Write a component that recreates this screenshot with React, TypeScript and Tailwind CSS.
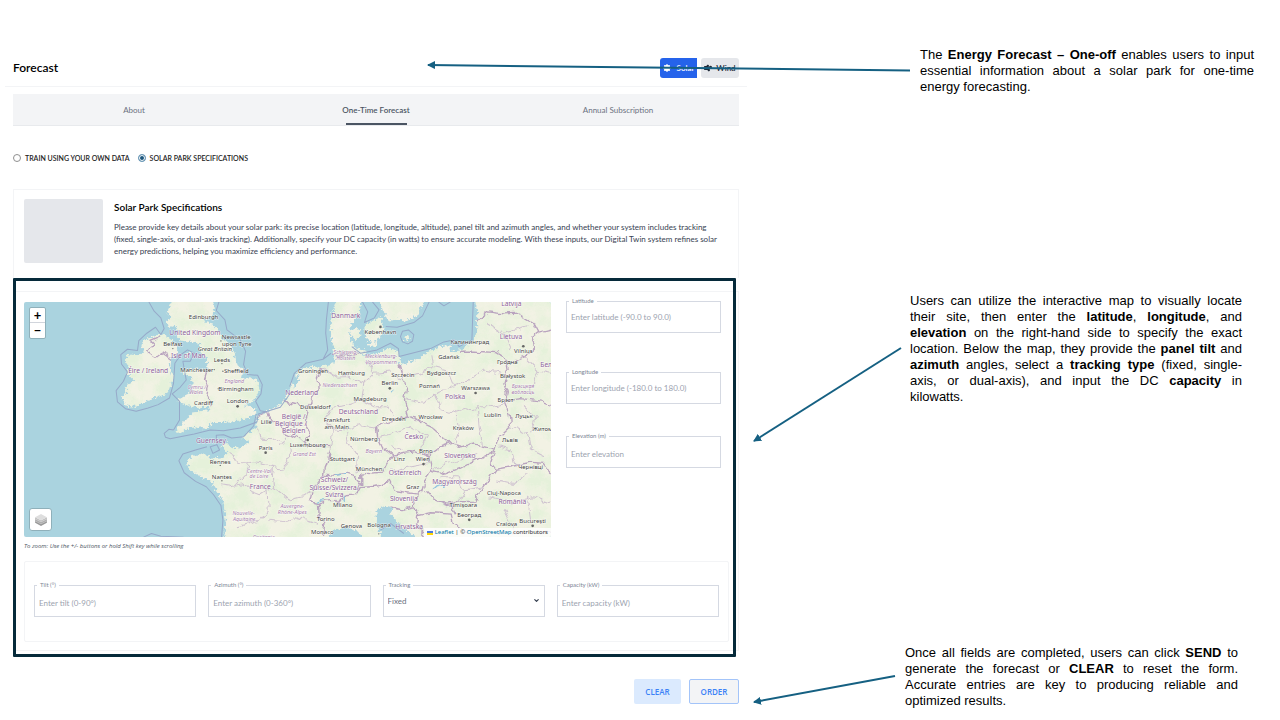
import React, { useState } from 'react';
import { ChevronDown, Wind } from 'lucide-react';

type Point = [x: number, y: number, text: string];

const COUNTRIES: Point[] = [
  [554, 136, 'United Kingdom'], [534, 204, 'Isle of Man'], [414, 249, 'Éire / Ireland'], [602, 458, 'Guernsey'],
  [750, 597, 'France'], [1006, 85, 'Danmark'], [874, 315, 'Nederland'], [850, 386, 'België /'], [842, 408, 'Belgique /'],
  [850, 430, 'Belgien'], [1044, 373, 'Deutschland'], [1334, 327, 'Polska'], [1210, 448, 'Česko'], [1348, 504, 'Slovensko'],
  [1184, 556, 'Österreich'], [972, 576, 'Schweiz/'], [972, 599, 'Suisse/Svizzera/'], [972, 621, 'Svizra'],
  [1180, 633, 'Slovenija'], [1332, 582, 'Magyarország'], [1505, 641, 'România'], [1196, 716, 'Hrvatska'],
  [1501, 148, 'Lietuva'], [1502, 48, 'Latvija'], [1612, 232, 'Бела'],
];

const REGIONS: Point[] = [
  [672, 278, 'England'], [560, 296, 'Cymru /'], [558, 312, 'Wales'], [746, 548, 'Centre-Val'], [746, 565, 'de Loire'],
  [700, 676, 'Nouvelle-'], [702, 693, 'Aquitaine'], [760, 746, 'Occitanie'], [846, 655, 'Auvergne-'], [846, 672, 'Rhône-Alpes'],
  [882, 497, 'Grand Est'], [1006, 193, 'Schleswig-'], [1006, 210, 'Holstein'], [1112, 204, 'Mecklenburg-'],
  [1112, 221, 'Vorpommern'], [988, 290, 'Niedersachsen'], [1090, 490, 'Bayern'], [1537, 294, 'Брэсцкая'], [1537, 311, 'вобласць'],
];

const CITIES: Point[] = [
  [580, 88, 'Edinburgh'], [678, 148, 'Newcastle'], [680, 168, 'upon Tyne'], [488, 169, 'Belfast'], [635, 215, 'Leeds'],
  [560, 245, 'Manchester'], [678, 250, 'Sheffield'], [677, 302, 'Birmingham'], [580, 344, 'Cardiff'], [682, 340, 'London'],
  [768, 402, 'Lille'], [766, 480, 'Paris'], [630, 521, 'Rennes'], [635, 566, 'Nantes'], [1110, 132, 'København'],
  [908, 248, 'Groningen'], [1023, 254, 'Hamburg'], [1177, 261, 'Szczecin'], [1315, 208, 'Gdańsk'], [1293, 254, 'Bydgoszcz'],
  [1378, 163, 'Калининград'], [1138, 285, 'Berlin'], [1257, 293, 'Poznań'], [1395, 301, 'Warszawa'], [1079, 333, 'Magdeburg'],
  [915, 358, 'Düsseldorf'], [979, 397, 'Frankfurt'], [979, 417, 'am Main'], [1150, 392, 'Dresden'], [1260, 388, 'Wrocław'],
  [1446, 382, 'Lublin'], [1538, 190, 'Vilnius'], [1490, 222, 'Гродна'], [1506, 265, 'Białystok'], [1485, 336, 'Брэст'],
  [1540, 385, 'Луцьк'], [1596, 422, 'Житом'], [1498, 456, 'Львів'], [1358, 420, 'Kraków'], [892, 472, 'Luxembourg'],
  [1060, 453, 'Nürnberg'], [996, 512, 'Stuttgart'], [1076, 544, 'München'], [1167, 512, 'Linz'], [1237, 514, 'Wien'],
  [1246, 489, 'Brno'], [1207, 598, 'Graz'], [1560, 537, 'Чернівці'], [1480, 616, 'Cluj-Napoca'], [1358, 651, 'Timișoara'],
  [1376, 680, 'Београд'], [1488, 707, 'Craiova'], [1566, 698, 'București'], [997, 652, 'Milano'], [946, 694, 'Torino'],
  [1023, 714, 'Genova'], [1106, 711, 'Bologna'], [936, 731, 'Monaco'],
];

const DOTS = [
  [682, 349], [766, 488], [1110, 111], [1138, 295], [1395, 309], [1538, 169], [1239, 522], [892, 450], [1376, 689], [1566, 707],
  [632, 153], [488, 176], [635, 221], [612, 239], [638, 244], [624, 296], [630, 526], [635, 572], [1180, 386], [1105, 731],
];

const LAND = [
  // Great Britain
  'M488 30L470 68L482 80L468 98L474 112L494 108L506 122L500 140L514 152L548 156L566 162L572 188L590 206L592 240L562 236L528 240L520 250L546 262L548 300L520 320L500 332L532 346L562 352L596 350L604 360L570 364L544 368L530 388L508 408L496 426L514 430L534 414L562 412L588 416L606 396L642 396L680 392L712 386L738 370L736 356L704 346L736 328L748 300L742 272L716 262L694 266L700 242L682 226L672 190L660 164L640 150L622 116L602 100L576 94L604 84L614 58L608 30Z',
  // Ireland
  'M402 150L438 136L464 134L486 150L504 172L502 196L480 208L478 232L488 262L480 296L468 312L438 322L402 336L374 350L344 346L336 318L352 308L344 290L370 270L350 250L356 230L344 212L352 194L386 196L402 184L394 166Z',
  // Isle of Man and Anglesey
  'M526 190L540 184L536 202L526 206Z', 'M520 240L534 234L540 246L524 252Z',
  // Continent
  'M642 750L646 690L640 634L620 602L602 572L576 562L540 542L528 514L548 498L576 490L606 506L640 500L652 490L634 464L652 460L662 476L700 470L716 456L694 442L738 412L742 378L772 364L802 350L822 332L838 300L848 268L866 240L900 232L930 230L958 226L974 214L970 180L964 150L960 110L966 72L980 30L1052 30L1048 70L1026 96L1016 130L1026 160L1042 178L1070 184L1054 196L1072 200L1104 190L1132 176L1156 180L1172 204L1168 222L1210 214L1250 188L1290 168L1316 166L1320 186L1350 182L1374 164L1392 150L1400 110L1400 70L1394 30L1640 30L1640 750Z',
  // Danish islands, Sweden, Bornholm
  'M1020 120L1044 114L1050 136L1038 150L1022 140Z', 'M1062 108L1090 92L1112 84L1120 118L1108 146L1086 158L1064 140Z',
  'M1068 160L1098 156L1100 168L1080 172Z', 'M1106 30L1120 70L1136 92L1172 88L1184 96L1222 76L1242 30Z', 'M1184 134L1196 140L1192 152L1182 146Z',
];

const WATER = [
  'M1098 660L1126 646L1146 652L1140 670L1156 692L1184 716L1226 750L1120 750L1100 712Z',
  'M946 750L972 722L1004 712L1036 718L1066 750Z',
  'M846 262L868 256L862 280L850 296Z', 'M1600 748L1624 740L1624 750Z',
];

const BORDERS = [
  'M412 184L428 164L418 152L450 138M412 184L436 202L454 188L482 208',
  'M594 238L586 262L598 290L592 320L604 350',
  'M744 378L772 366L778 388L808 400L822 426L850 440L884 456L914 468L962 470',
  'M820 336L850 342L880 350L890 370L882 400L896 424L888 450L894 470',
  'M890 362L900 330L924 304L920 266L934 232',
  'M962 470L952 506L942 552L974 556L1008 550L1030 556L1054 582',
  'M942 552L922 580L904 606L898 634L924 640L940 630L974 628L986 642L1004 614L1030 612L1052 590L1100 584L1140 574L1154 602L1220 612',
  'M924 640L926 676L944 700L936 741',
  'M1168 222L1178 260L1188 300L1182 330L1194 378L1164 386L1130 396L1098 412L1102 440L1116 470L1150 498L1130 522L1118 546L1054 552L1054 582',
  'M1194 378L1230 396L1264 412L1290 436L1318 460L1350 470L1392 462L1430 472L1454 478L1464 444L1500 410L1496 376L1482 340L1490 310L1480 282L1490 240L1484 206L1456 188L1396 184L1352 184',
  'M1150 498L1184 490L1216 484L1254 500L1290 470L1318 460',
  'M1254 500L1264 540L1242 570L1234 600L1220 612L1210 650L1170 658L1140 650',
  'M1264 540L1306 552L1350 536L1398 510L1440 490L1454 478',
  'M1242 600L1270 630L1310 646L1346 638L1390 636L1420 590L1456 538L1500 530L1560 516L1598 520L1624 556',
  'M1456 538L1440 518L1454 478M1210 650L1222 676L1260 668L1322 672L1328 700L1370 724L1440 728L1500 730L1624 726',
  'M1222 676L1218 704L1250 741M1322 645L1336 672',
  'M1400 90L1430 66L1480 72L1524 70L1570 98L1584 124L1560 142L1574 170L1540 200L1500 216L1484 206M1584 130L1624 120',
  'M1490 332L1530 326L1600 334L1624 344',
  'M962 190L1004 200L1046 192',
];

const REGION_LINES = [
  'M652 490L690 514L714 516L706 552L670 590L634 584M742 412L748 444L790 446L820 466M714 516L748 520L790 530L786 560L790 590L750 614L724 604L700 584L660 590',
  'M790 530L820 534L838 500L836 470M786 590L834 630L876 620L900 604M770 600L774 660L750 690L680 710M774 690L820 694L858 680L920 700M810 470L830 440',
  'M934 232L980 262L1016 260L1060 280L1054 330L1010 346L964 352L942 392L966 416L962 470M1060 280L1090 250L1070 210M1090 250L1140 246L1176 270',
  'M1054 330L1090 350L1130 350L1150 380M966 416L1010 420L1050 404L1098 412M1010 420L1016 460L1044 500L1040 550',
  'M1178 260L1230 250L1270 230L1264 190M1270 230L1310 240L1330 290L1376 270L1420 240L1470 250M1188 330L1240 340L1270 310L1330 290M1270 310L1290 356L1340 370L1400 350L1440 350L1490 340M1340 370L1346 420L1330 460M1400 350L1406 410L1416 466',
  'M1102 440L1144 430L1200 410L1250 440L1230 480M1140 470L1180 480M1264 540L1310 520L1354 506L1400 490M1290 560L1340 560L1360 600L1420 590M1340 640L1366 600M1150 540L1200 530L1254 520',
  'M1460 570L1510 580L1550 550M1440 620L1500 640L1570 620L1624 640M1480 660L1510 720M1550 620L1560 690M1500 410L1550 430L1560 480L1600 500M1560 430L1574 380L1540 350M1520 530L1500 480L1464 470',
  'M1430 100L1480 130L1500 180M1480 130L1550 110M1540 200L1580 240L1624 250M1580 240L1560 310',
];

const MARITIME = [
  'M416 36L432 64L452 84L462 116L452 134L436 112L410 130L386 152L382 182L352 178L332 194L334 222L352 246L340 274L318 302L322 336L346 356L378 364L414 354L444 344L478 324L490 280L494 220L512 194L532 180L552 190L540 214L518 214L528 270L510 292L486 312L508 334L508 390L490 420',
  'M490 420L476 418L462 430L466 442L480 446L510 440L552 432L600 420L640 422L690 414L740 396L744 372L810 352L840 310',
  'M626 36L618 62L644 90L650 120L690 150L706 184L700 224L712 254L742 256L756 284L752 312L736 334L750 362L770 366',
  'M738 372L730 408L700 440L664 444L640 434L618 436L620 464L600 470L608 490L628 480L620 464M590 470L556 480L518 492L506 512L522 548L556 574L588 590L610 614L632 646L638 690L634 741',
  'M400 741L424 730L452 738L520 741',
  'M838 290L852 250L886 220L938 208L952 180L946 130L948 90L954 36M1056 36L1072 66L1062 98L1092 84L1106 60L1086 36M938 208L962 190M1024 170L1050 190L1100 180L1140 160L1164 176L1166 200L1260 176L1300 156L1330 150L1346 170L1384 150L1386 90L1388 36',
  'M1126 110L1160 112L1210 98L1236 78L1256 36M1170 140L1176 124L1194 120L1210 134L1206 154L1192 162L1176 156ZM1284 36L1300 48L1320 36',
  'M1110 720L1140 700L1180 730',
];

const RIVERS = [
  'M1264 598L1280 590L1300 584', 'M974 556L1006 552', 'M920 634L934 628', 'M1000 618L1006 632', 'M1140 310L1150 300',
];

const HALO = 'stroke-white/70 [stroke-width:3] [paint-order:stroke] [stroke-linejoin:round]';

function EuropeMap() {
  return (
    <svg
      viewBox="42 36 1579 705"
      preserveAspectRatio="xMidYMid slice"
      className="block h-[235px] w-full bg-[#aad3df] font-['Noto_Sans','Open_Sans',sans-serif]"
      role="img"
      aria-label="Map of Europe"
    >
      <defs>
        <filter id="coast" x="-5%" y="-5%" width="110%" height="110%">
          <feTurbulence type="fractalNoise" baseFrequency="0.12" numOctaves="3" seed="4" />
          <feDisplacementMap in="SourceGraphic" scale="20" xChannelSelector="R" yChannelSelector="G" />
        </filter>
        <filter id="line" x="-5%" y="-5%" width="110%" height="110%">
          <feTurbulence type="fractalNoise" baseFrequency="0.04" numOctaves="2" seed="7" />
          <feDisplacementMap in="SourceGraphic" scale="24" xChannelSelector="R" yChannelSelector="G" />
        </filter>
        <filter id="terrain" x="0" y="0" width="100%" height="100%">
          <feTurbulence type="fractalNoise" baseFrequency="0.018" numOctaves="4" seed="11" />
          <feColorMatrix values="0 0 0 0 0.74  0 0 0 0 0.88  0 0 0 0 0.67  0 3 0 0 -1.1" />
          <feComposite in2="SourceGraphic" operator="in" />
        </filter>
      </defs>

      <g filter="url(#coast)">
        <g className="fill-[#f2f2e4]">
          {LAND.map((d) => <path key={d} d={d} />)}
        </g>
        <g filter="url(#terrain)" opacity="0.65">
          {LAND.map((d) => <path key={d} d={d} />)}
        </g>
        <g className="fill-[#aad3df]">
          {WATER.map((d) => <path key={d} d={d} />)}
        </g>
      </g>
      <g filter="url(#line)" fill="none">
        <g className="stroke-[#b9a3bf]" strokeWidth="4">
          {BORDERS.map((d) => <path key={d} d={d} />)}
        </g>
        <g className="stroke-[#cfc2d0]" strokeWidth="3">
          {REGION_LINES.map((d) => <path key={d} d={d} />)}
        </g>
        <g className="stroke-[#8fc3e0]" strokeWidth="4">
          {RIVERS.map((d) => <path key={d} d={d} />)}
        </g>
      </g>
      <g className="fill-none stroke-[#96a9c9]" strokeWidth="3" strokeLinejoin="round">
        {MARITIME.map((d) => <path key={d} d={d} />)}
      </g>

      <g className="fill-[#666666]">
        {DOTS.map(([x, y], i) => <circle key={i} cx={x} cy={y} r={i < 10 ? 4 : 2} />)}
      </g>
      <g textAnchor="middle" className={`fill-[#a87fae] text-[16px] italic ${HALO}`}>
        {REGIONS.map(([x, y, text]) => <text key={text} x={x} y={y}>{text}</text>)}
      </g>
      <g textAnchor="middle" className={`fill-[#8d5f99] text-[20px] ${HALO}`}>
        {COUNTRIES.map(([x, y, text]) => <text key={text} x={x} y={y}>{text}</text>)}
      </g>
      <g textAnchor="middle" className={`fill-[#3f3f3f] text-[18px] ${HALO}`}>
        {CITIES.map(([x, y, text]) => <text key={text} x={x} y={y}>{text}</text>)}
        <text x={614} y={184} className="italic">Great Britain</text>
      </g>
    </svg>
  );
}

function LayersIcon() {
  return (
    <svg viewBox="0 0 26 26" className="size-[14px]">
      <path d="M2 15L13 20.500L24 15V18L13 24L2 18Z" fill="#9a9a9a" />
      <path d="M2 11L13 16.500L24 11V15L13 20.500L2 15Z" fill="#b0b0b0" />
      <path d="M2 8L13 13.500L24 8V11L13 16.500L2 11Z" fill="#c2c2c2" />
      <path d="M13 2L24 8L13 13.500L2 8Z" fill="#dedede" />
    </svg>
  );
}

function SolarIcon() {
  return (
    <svg viewBox="0 0 16 16" className="size-2 fill-current">
      <circle cx="8" cy="8" r="5.500" />
      <circle cx="8" cy="2.500" r="2.200" />
      <circle cx="12" cy="4" r="2.200" />
      <circle cx="13.500" cy="8" r="2.200" />
      <circle cx="12" cy="12" r="2.200" />
      <circle cx="8" cy="13.500" r="2.200" />
      <circle cx="4" cy="12" r="2.200" />
      <circle cx="2.500" cy="8" r="2.200" />
      <circle cx="4" cy="4" r="2.200" />
    </svg>
  );
}

interface FieldProps {
  id: string;
  label: string;
  children: React.ReactNode;
}

const Field: React.FC<FieldProps> = ({ id, label, children }) => (
  <fieldset className="relative h-9 min-w-0 border border-[#d5d9e2]">
    <legend className="ml-[2px] px-[3px] text-[6px] leading-[8px] text-[#7b8494]">
      <label htmlFor={id} className="block">{label}</label>
    </legend>
    {children}
  </fieldset>
);

const inputClass = 'block w-full bg-transparent px-1 text-[8px] text-gray-600 outline-none placeholder:text-[#9ca3af]';

const Tab = ({ label, active, onClick }: { label: string; active: boolean; onClick: () => void }) => (
  <button
    type="button"
    role="tab"
    aria-selected={active}
    onClick={onClick}
    className={`flex h-8 flex-col items-center justify-between border-b border-[#e8eaed] pt-2 text-[8px] leading-4 ${active ? 'font-semibold text-[#4b5563]' : 'text-[#6b7280]'}`}
  >
    {label}
    <span className={`h-[2px] w-[61px] ${active ? 'bg-[#4b5563]' : ''}`} />
  </button>
);

const radioClass = 'size-2 appearance-none rounded-full border border-[#8f8f8f] bg-white checked:border-[#6f9dbc] checked:bg-[#1c567d] checked:shadow-[inset_0_0_0_1px_white]';

const TABS = ['About', 'One-Time Forecast', 'Annual Subscription'];

function ForecastForm() {
  const [tab, setTab] = useState('One-Time Forecast');
  const [mode, setMode] = useState('specs');

  return (
    <main className="min-w-0 pt-[50px] font-['Lato','Open_Sans',sans-serif] text-gray-900">
      <header className="ml-[5px] flex h-[37px] items-center justify-between border-b border-[#f3f4f6] pr-2 pl-2">
        <h1 className="text-xs font-semibold text-black">Forecast</h1>
        <div className="flex gap-1 text-[8px] font-semibold">
          <button type="button" className="flex h-5 w-[37px] items-center justify-center gap-[6px] rounded-l-[3px] bg-[#2563eb] text-white">
            <SolarIcon />
            Solar
          </button>
          <button type="button" className="flex h-5 w-[38px] items-center justify-center gap-1 rounded-[3px] bg-[#e5e7eb] text-[#1f2937]">
            <Wind className="size-2 stroke-[4]" />
            Wind
          </button>
        </div>
      </header>

      <div className="pr-2 pl-[13px]">
        <div role="tablist" className="mt-[7px] grid grid-cols-3 bg-[#f3f4f6]">
          {TABS.map((t) => <Tab key={t} label={t} active={t === tab} onClick={() => setTab(t)} />)}
        </div>

        <div className="mt-[26px] flex h-3 items-center gap-2 text-[7px] font-semibold text-[#222222]">
          <label className="flex items-center gap-1">
            <input type="radio" name="mode" className={radioClass} checked={mode === 'own'} onChange={() => setMode('own')} />
            TRAIN USING YOUR OWN DATA
          </label>
          <label className="flex items-center gap-1">
            <input type="radio" name="mode" className={radioClass} checked={mode === 'specs'} onChange={() => setMode('specs')} />
            SOLAR PARK SPECIFICATIONS
          </label>
        </div>

        <section className="mt-[25px] flex h-[89px] gap-[11px] border border-b-0 border-[#f3f4f6] pt-[9px] pr-3 pl-[10px]">
          <div className="h-16 w-[79px] shrink-0 rounded-[2px] bg-[#e5e7eb]" />
          <div>
            <h2 className="text-[10px] leading-4 font-semibold text-black">Solar Park Specifications</h2>
            <p className="mt-[6px] text-[8px] leading-3 text-[#374151]">
              Please provide key details about your solar park: its precise location (latitude, longitude, altitude), panel tilt and azimuth angles, and whether your system includes tracking<br />
              (fixed, single-axis, or dual-axis tracking). Additionally, specify your DC capacity (in watts) to ensure accurate modeling. With these inputs, our Digital Twin system refines solar<br />
              energy predictions, helping you maximize efficiency and performance.
            </p>
          </div>
        </section>

        <div className="relative pt-[13px]">
          <section className="border border-[#f3f4f6] pt-[5px] pr-[9px] pb-2 pl-[10px]">
            <div className="flex gap-[15px] pr-2">
              <div className="min-w-0 flex-1 pt-[5px]">
                <div className="relative overflow-hidden rounded-[2px]">
                  <EuropeMap />
                  <div className="absolute top-[5px] left-[5px] flex flex-col divide-y divide-gray-300 rounded-[2px] border border-[#8fb0ba] bg-white text-[13px] leading-none font-bold text-black">
                    <button type="button" aria-label="Zoom in" className="size-[15px]">+</button>
                    <button type="button" aria-label="Zoom out" className="size-[15px]">−</button>
                  </div>
                  <button type="button" aria-label="Layers" className="absolute bottom-[6px] left-[5px] flex size-[23px] items-center justify-center rounded-[3px] border border-[#8fb0ba] bg-white">
                    <LayersIcon />
                  </button>
                  <div className="absolute right-0 bottom-0 flex items-center bg-white/80 px-[3px] font-['Noto_Sans',sans-serif] text-[6px] leading-[9px] whitespace-pre text-[#333333]">
                    <svg viewBox="0 0 12 8" className="mr-[2px] h-1 w-[6px]">
                      <path fill="#4c7be1" d="M0 0h12v4H0z" />
                      <path fill="#ffd500" d="M0 4h12v4H0z" />
                    </svg>
                    <a href="#leaflet" className="text-[#0078a8]">Leaflet</a>
                    {' | © '}
                    <a href="#osm" className="text-[#0078a8]">OpenStreetMap</a>
                    {' contributors'}
                  </div>
                </div>
                <p className="mt-1 font-['Open_Sans',sans-serif] text-[6px] leading-[10px] text-[#4b5563] italic">To zoom: Use the +/- buttons or hold Shift key while scrolling</p>
              </div>
              <div className="w-[155px] shrink-0">
                <Field id="latitude" label="Latitude">
                  <input id="latitude" className={`${inputClass} h-6`} placeholder="Enter latitude (-90.0 to 90.0)" />
                </Field>
                <div className="mt-[35px]">
                  <Field id="longitude" label="Longitude">
                    <input id="longitude" className={`${inputClass} h-6`} placeholder="Enter longitude (-180.0 to 180.0)" />
                  </Field>
                </div>
                <div className="mt-[28px]">
                  <Field id="elevation" label="Elevation (m)">
                    <input id="elevation" className={`${inputClass} h-7`} placeholder="Enter elevation" />
                  </Field>
                </div>
              </div>
            </div>

            <div className="mt-[10px] grid h-[81px] grid-cols-4 gap-3 rounded-[2px] border border-[#f3f4f6] px-[9px] pt-[19px]">
              <Field id="tilt" label="Tilt (°)">
                <input id="tilt" className={`${inputClass} h-7`} placeholder="Enter tilt (0-90°)" />
              </Field>
              <Field id="azimuth" label="Azimuth (°)">
                <input id="azimuth" className={`${inputClass} h-7`} placeholder="Enter azimuth (0-360°)" />
              </Field>
              <Field id="tracking" label="Tracking">
                <select id="tracking" defaultValue="Fixed" className="block h-6 w-full appearance-none bg-transparent px-1 text-[8px] text-[#6b7280] outline-none">
                  <option>Fixed</option>
                  <option>Single-axis</option>
                  <option>Dual-axis</option>
                </select>
                <ChevronDown className="pointer-events-none absolute top-2 right-1 size-[7px] stroke-[4] text-[#374151]" />
              </Field>
              <Field id="capacity" label="Capacity (kW)">
                <input id="capacity" className={`${inputClass} h-7`} placeholder="Enter capacity (kW)" />
              </Field>
            </div>
          </section>
          {/* highlight around the form */}
          <div className="pointer-events-none absolute top-0 right-[3px] bottom-[-6px] left-0 rounded-[1px] border-3 border-[#062a3a]" />
        </div>

        <div className="mt-[28px] flex justify-end gap-2 font-['Open_Sans',sans-serif] text-[8px] font-semibold text-[#3b82f6]">
          <button type="button" className="h-[25px] w-[47px] rounded-[2px] bg-[#dbeafe]">CLEAR</button>
          <button type="button" className="h-[25px] w-[50px] rounded-[2px] border border-[#a3c4f9] bg-[#f3f4f6]">ORDER</button>
        </div>
      </div>
    </main>
  );
}

function Notes() {
  return (
    <aside className="pt-[47px] text-justify font-['Liberation_Sans',Arial,sans-serif] text-[13px] leading-4 text-black">
      <p className="pr-[26px] pl-[173px]">
        The <b>Energy Forecast – One-off</b> enables users to input essential information about a solar park for one-time energy forecasting.
      </p>
      <p className="mt-[198px] pr-[38px] pl-[163px]">
        Users can utilize the interactive map to visually locate their site, then enter the <b>latitude</b>, <b>longitude</b>, and <b>elevation</b> on the right-hand side to specify the exact location. Below the map, they provide the <b>panel tilt</b> and <b>azimuth</b> angles, select a <b>tracking type</b> (fixed, single-axis, or dual-axis), and input the DC <b>capacity</b> in kilowatts.
      </p>
      <p className="mt-[240px] pr-[42px] pl-[158px]">
        Once all fields are completed, users can click <b>SEND</b> to generate the forecast or <b>CLEAR</b> to reset the form. Accurate entries are key to producing reliable and optimized results.
      </p>
    </aside>
  );
}

function Arrows() {
  return (
    <svg viewBox="0 0 1280 720" className="pointer-events-none absolute top-0 left-0 w-full fill-none stroke-[#156082]" strokeWidth="2">
      <defs>
        <marker id="head" viewBox="0 0 8 8" refX="7" refY="4" markerWidth="8" markerHeight="8" markerUnits="userSpaceOnUse" orient="auto">
          <path d="M0 0L8 4L0 8Z" className="fill-[#156082] stroke-none" />
        </marker>
      </defs>
      <path d="M910 70.500L428 65" markerEnd="url(#head)" />
      <path d="M901 348L754 441" markerEnd="url(#head)" />
      <path d="M895 676L754 702" markerEnd="url(#head)" />
    </svg>
  );
}

export default function App() {
  return (
    <div className="relative grid min-h-screen grid-cols-[747fr_533fr] bg-white">
      <ForecastForm />
      <Notes />
      <Arrows />
    </div>
  );
}
